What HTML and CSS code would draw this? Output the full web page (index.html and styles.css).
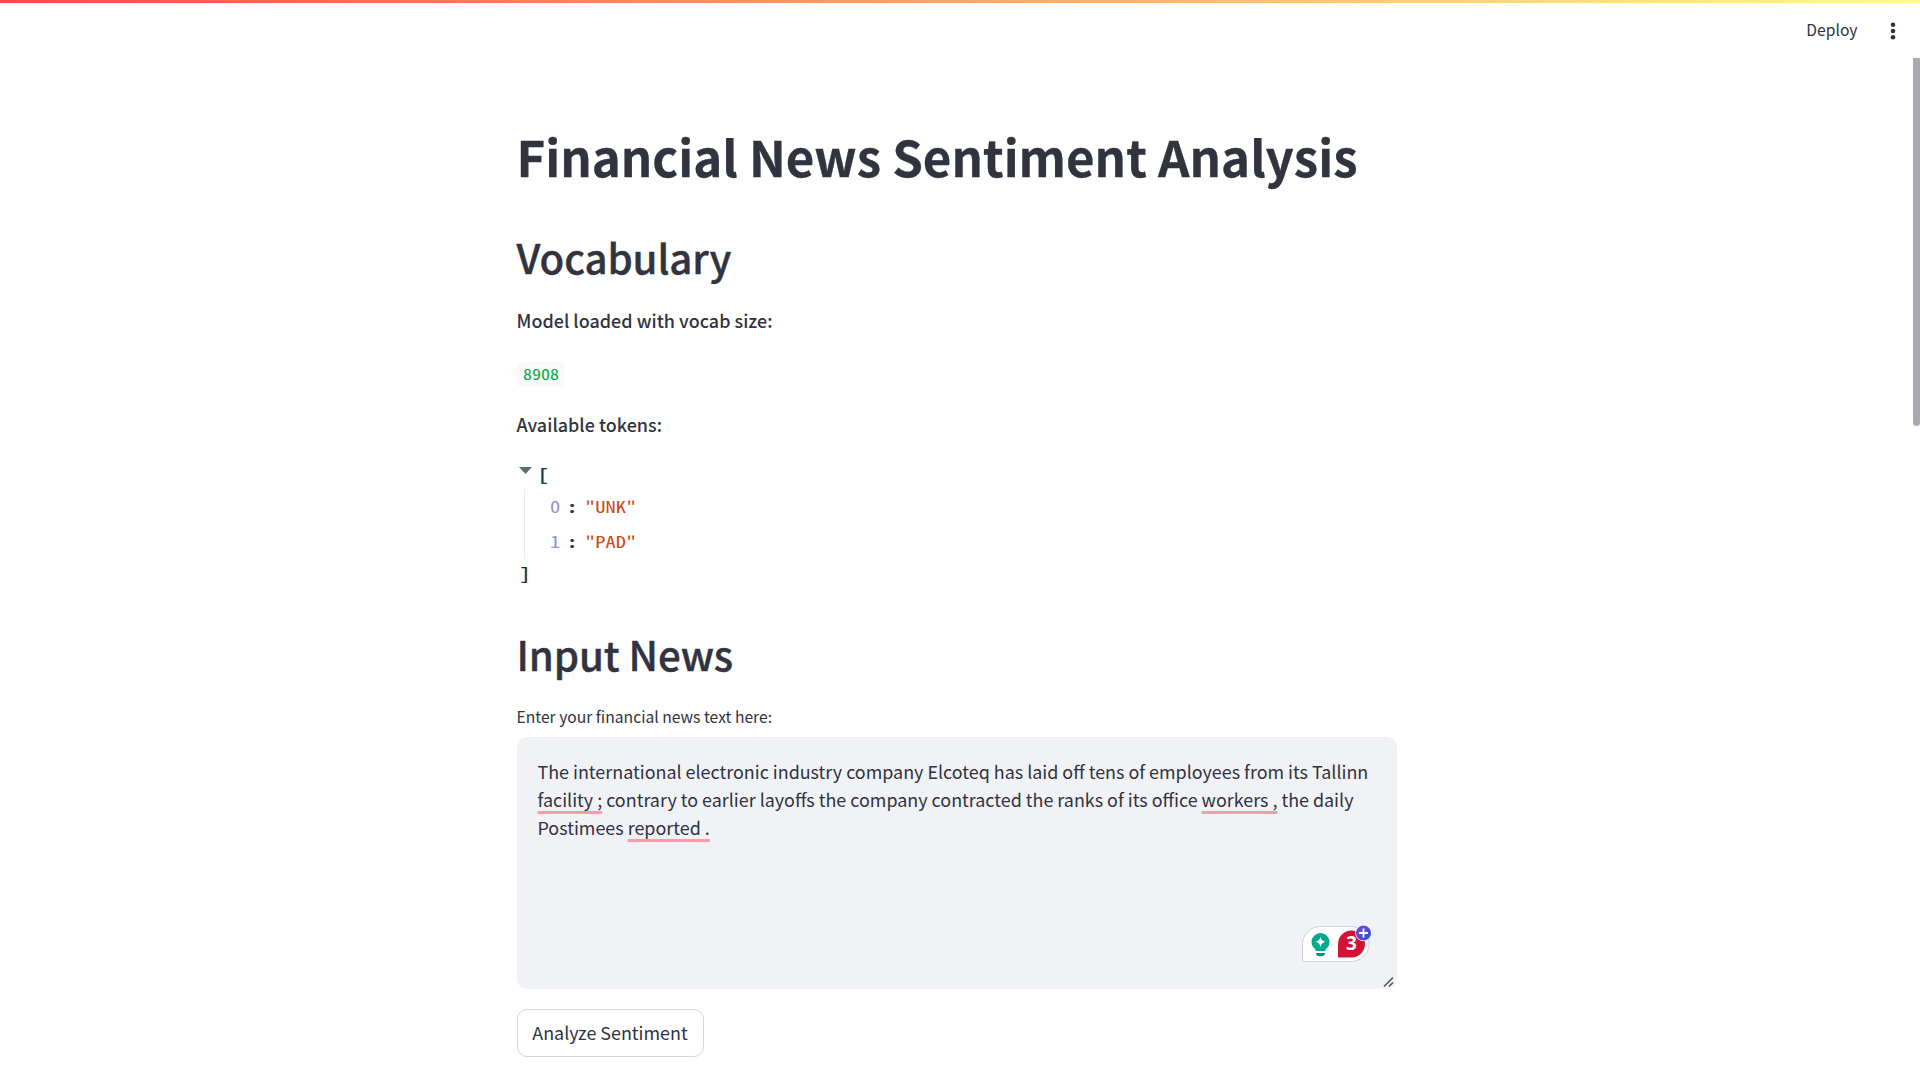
FILE: index.html
```html
<!DOCTYPE html>
<html lang="en">
<head>
<meta charset="utf-8">
<title>Financial News Sentiment Analysis</title>
<link rel="stylesheet" href="styles.css">
</head>
<body>
<div class="decoration"></div>
<header class="toolbar">
  <span class="deploy">Deploy</span>
  <svg class="menu" width="8" height="20" viewBox="0 0 8 20"><g fill="#31333f"><circle cx="4" cy="3.7" r="2.3"/><circle cx="4" cy="10" r="2.3"/><circle cx="4" cy="16.3" r="2.3"/></g></svg>
</header>
<div class="scrollbar"></div>
<main class="block">
  <h1>Financial News Sentiment Analysis</h1>
  <h2 class="vocab-heading">Vocabulary</h2>
  <p class="strong size-label">Model loaded with vocab size:</p>
  <code class="pill"><span class="wide">8908</span></code>
  <p class="strong token-label">Available tokens:</p>
  <div class="json">
    <div class="json-open"><svg width="13" height="7" viewBox="0 0 13 7"><path d="M0 0h13L6.5 7z" fill="#586e75"/></svg><span class="wide bracket">[</span></div>
    <div class="json-items">
      <div class="json-row"><span class="key wide">0</span><span class="colon wide">:</span><span class="value wide">"UNK"</span></div>
      <div class="json-row"><span class="key wide">1</span><span class="colon wide">:</span><span class="value wide">"PAD"</span></div>
    </div>
    <div class="json-close"><span class="wide bracket">]</span></div>
  </div>
  <h2 class="input-heading">Input News</h2>
  <label class="field-label">Enter your financial news text here:</label>
  <div class="textarea">
    <div class="line line-1">The international electronic industry company Elcoteq has laid off tens of employees from its Tallinn</div>
    <div class="line line-2"><u>facility ;</u> contrary to earlier layoffs the company contracted the ranks of its office <u>workers ,</u> the daily</div>
    <div class="line line-3">Postimees <u>reported .</u></div>
    <div class="assistant">
      <svg width="72" height="42" viewBox="0 0 72 42">
        <defs>
          <linearGradient id="plus" x1="0" y1="0" x2="1" y2="1"><stop offset="0" stop-color="#7a4bc4"/><stop offset="1" stop-color="#2b4fe0"/></linearGradient>
        </defs>
        <path d="M1.5 39.5V22.500a18 18 0 0 1 18-18h31a17.500 17.500 0 0 1 0 35z" fill="#fff" stroke="#ccd0de"/>
        <path d="M19.500 11a9 9 0 0 0-9 9c0 3.600 2 5.800 4 7.500v1.500h10v-1.500c2-1.700 4-3.900 4-7.500a9 9 0 0 0-9-9z" fill="#05a88c"/>
        <path d="M15 31h9c0 2-1.500 3.300-3.500 3.300h-2c-2 0-3.500-1.300-3.500-3.300z" fill="#05917b"/>
        <path d="M19.500 14.500c.8 3.400 1.900 4.500 5.300 5.300c-3.400.8-4.500 1.900-5.300 5.300c-.8-3.400-1.900-4.500-5.300-5.300c3.400-.8 4.500-1.900 5.300-5.300z" fill="#fff"/>
        <path d="M37 35.500V22a13.500 13.500 0 1 1 13.500 13.500z" fill="#d31236"/>
        <circle cx="62.500" cy="11" r="8.300" fill="#fff"/>
        <circle cx="62.500" cy="11" r="7.600" fill="url(#plus)"/>
        <path d="M62.500 6.500v9M58 11h9" stroke="#fff" stroke-width="1.800"/>
        <text x="50.500" y="28" text-anchor="middle" class="count">3</text>
      </svg>
    </div>
    <svg class="grip" width="12" height="12" viewBox="0 0 12 12"><path d="M1 10.500L10 1.500M6 10.500L10 6.500" stroke="#4a4b50" stroke-width="1.500"/></svg>
  </div>
  <button class="analyze">Analyze Sentiment</button>
</main>
</body>
</html>
```
FILE: styles.css
```css
* { box-sizing: border-box; }
body {
  margin: 0;
  height: 1080px;
  overflow: hidden;
  background: #fff;
  color: #31333f;
  font-family: "Noto Sans CJK SC", "Noto Sans", sans-serif;
  font-size: 17.92px;
}
h1, h2, p { margin: 0; }
.decoration {
  position: absolute;
  inset: 0 0 auto 0;
  height: 3px;
  background: linear-gradient(90deg, #ff4b4b, #fffd80);
}
.toolbar {
  height: 58px;
  padding: 2px 23.5px 0 0;
  display: flex;
  justify-content: flex-end;
  align-items: center;
  gap: 31px;
}
.menu { margin-top: 1px; }
.deploy { font-size: 15.67px; line-height: 28px; }
.scrollbar {
  position: absolute;
  top: 58px;
  right: 0;
  width: 7px;
  height: 368px;
  background: #a9a9b0;
  border-radius: 0 0 4px 4px;
}
.block {
  width: 880px;
  margin: 65px 0 0 516.5px;
  display: flex;
  flex-direction: column;
  align-items: flex-start;
}
h1 {
  font-size: 49.2px;
  font-weight: 700;
  line-height: 66px;
  white-space: nowrap;
  -webkit-text-stroke: .3px;
}
h2 {
  font-size: 40.2px;
  font-weight: 500;
  line-height: 54px;
  letter-spacing: -.1px;
  -webkit-text-stroke: .4px;
}
.vocab-heading { margin-top: 41px; }
.strong { font-weight: 500; line-height: 32px; letter-spacing: .03px; }
.size-label { margin-top: 20px; }
.pill {
  margin-top: 26px;
  width: 48px;
  height: 25px;
  padding-left: 6px;
  border-radius: 5px;
  background: #f8f9fb;
  color: #09ab3b;
  font: 300 15px/24px "Noto Sans Mono CJK SC", "Liberation Mono", monospace;
}
.wide {
  display: inline-block;
  transform: scaleX(1.28);
  transform-origin: 0 50%;
}
.pill .wide { transform: scaleX(1.2); }
.token-label { margin-top: 21px; }
.json {
  margin-top: 21px;
  height: 136px;
  font: 300 16px/35px "Noto Sans Mono CJK SC", "Liberation Mono", monospace;
  color: #002b36;
}
.json-open {
  height: 28px;
  padding-left: 2px;
  display: flex;
  gap: 6px;
  line-height: 26px;
}
.json-open svg { margin-top: 6px; }
.bracket { -webkit-text-stroke: .4px; }
.json-items {
  margin-left: 7px;
  padding-left: 25px;
  border-left: 1px solid #ebebeb;
}
.json-row { display: flex; height: 35px; }
.key { width: 17px; color: #9492d0; }
.colon { width: 18px; font-weight: 700; color: #1c4450; }
.value { color: #cb4b16; }
.json-close { padding-left: 3px; line-height: 28px; }
.input-heading { margin-top: 30px; }
.field-label { margin-top: 22px; font-size: 15.67px; line-height: 28px; }
.textarea {
  position: relative;
  margin-top: 6px;
  width: 880.5px;
  height: 252px;
  padding: 20px 21px;
  border-radius: 10px;
  background: #f0f2f6;
}
.line { line-height: 28px; white-space: nowrap; }
u {
  text-decoration: underline #ff9aac 3px;
  text-underline-offset: 4px;
  text-decoration-skip-ink: none;
}
.assistant { position: absolute; right: 24px; bottom: 25px; height: 42px; }
.count { font: 700 19px "Noto Sans", sans-serif; fill: #fff; }
.grip { position: absolute; right: 2px; bottom: 1px; }
.analyze {
  margin-top: 20px;
  width: 187px;
  height: 48px;
  padding: 0 0 2px;
  border: 1px solid #d6d6d9;
  border-radius: 10px;
  background: #fff;
  color: inherit;
  font: inherit;
  line-height: 30px;
}
```
